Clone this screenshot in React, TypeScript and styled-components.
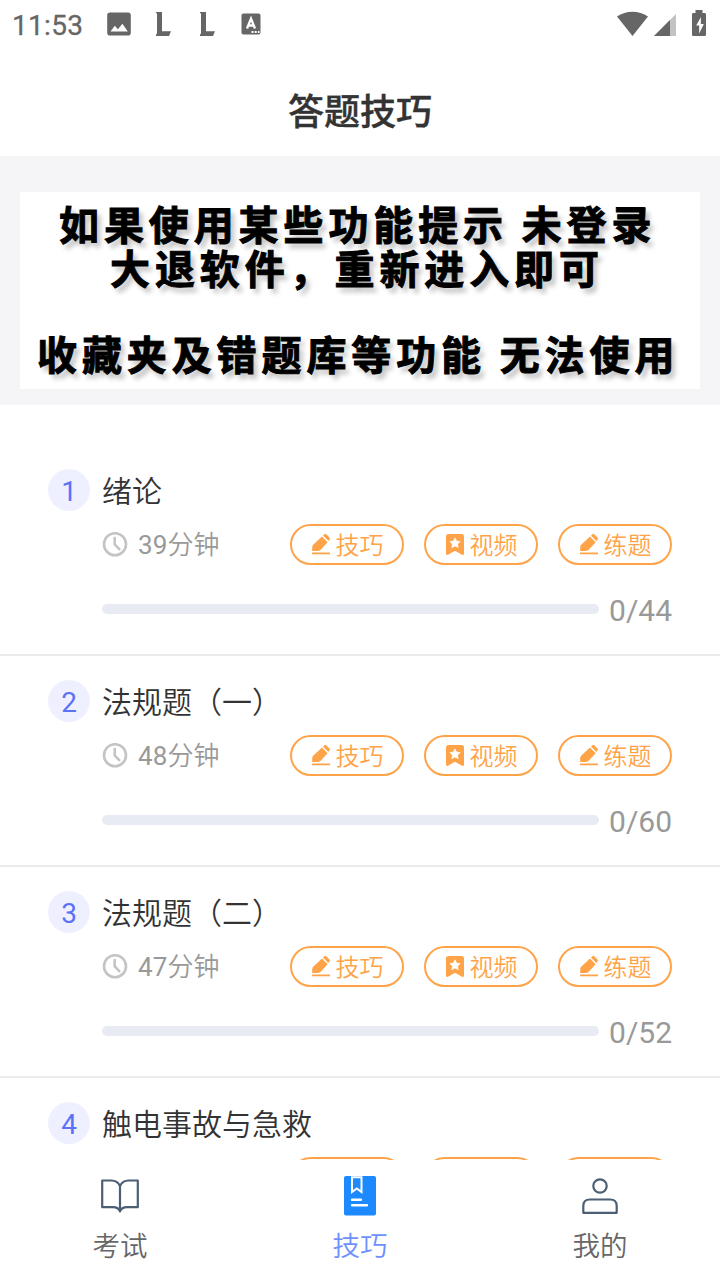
import React from "react";
import styled, { createGlobalStyle } from "styled-components";

const GlobalStyle = createGlobalStyle`
  * { box-sizing: border-box; }
  html, body { margin: 0; padding: 0; background: #fff; overflow: hidden; }
  body { font-family: Roboto, "Noto Sans CJK SC", sans-serif; }
  svg { display: block; flex: none; }
`;

const Screen = styled.div`
  width: 720px;
  height: 1280px;
  display: flex;
  flex-direction: column;
  background: #fff;
  overflow: hidden;
`;

const StatusBar = styled.div`
  height: 48px;
  flex: none;
  display: flex;
  justify-content: space-between;
  color: #666;
`;

const StatusGroup = styled.div`
  display: flex;
  align-items: flex-start;
`;

const Clock = styled.span`
  width: 107px;
  padding-left: 12px;
  font-size: 28px;
  font-weight: 400;
  line-height: 52px;
  letter-spacing: 0.3px;
  -webkit-text-stroke: 0.3px #666;
`;

const Header = styled.header`
  height: 108px;
  flex: none;
  text-align: center;
  font-size: 36px;
  font-weight: 500;
  line-height: 131px;
  color: #333;
  -webkit-text-stroke: 0.4px #333;
`;

const BannerArea = styled.section`
  height: 249px;
  flex: none;
  padding: 36px 20px 16px;
  background: #f5f5f8;
`;

const Banner = styled.div`
  height: 197px;
  background: #fff;
  overflow: hidden;
  padding-top: 9px;
`;

const BannerLine = styled.div<{ $indent: number; $gapAfter?: number }>`
  height: 44px;
  margin-left: ${(p) => p.$indent}px;
  margin-bottom: ${(p) => p.$gapAfter || 0}px;
  font-family: "Noto Sans CJK SC", sans-serif;
  font-size: 40px;
  font-weight: 700;
  line-height: 44px;
  letter-spacing: 4.9px;
  word-spacing: -0.3px;
  white-space: nowrap;
  color: #000;
  -webkit-text-stroke: 1px #000;
  text-shadow: 4px 5px 5px rgba(0, 0, 0, 0.25);
`;

const List = styled.main`
  flex: 1;
  min-height: 0;
  overflow: hidden;
  padding-top: 40px;
`;

const Item = styled.article`
  height: 211px;
  padding: 24px 48px 0;
  border-bottom: 2px solid #ebebeb;
`;

const TitleRow = styled.div`
  display: flex;
  align-items: center;
  height: 42px;
`;

const Badge = styled.span`
  width: 42px;
  height: 42px;
  border-radius: 50%;
  background: #eff0ff;
  color: #5b72f8;
  font-size: 28px;
  line-height: 45px;
  text-align: center;
`;

const Title = styled.h2`
  margin: 3px 0 0 12px;
  font-size: 30px;
  font-weight: 350;
  line-height: 42px;
  color: #333;
`;

const MetaRow = styled.div`
  display: flex;
  align-items: center;
  height: 41px;
  margin: 13px 0 0 54px;
`;

const Duration = styled.span`
  flex: 1;
  margin-left: 10px;
  padding-top: 1px;
  font-size: 26px;
  line-height: 42px;
  letter-spacing: 0.1px;
  color: #999;
`;

const Light = styled.span`
  font-weight: 350;
`;

const Pills = styled.div`
  display: flex;
  gap: 20px;
`;

const Pill = styled.button`
  width: 114px;
  height: 41px;
  padding: 3px 0 0;
  display: flex;
  align-items: center;
  justify-content: center;
  gap: 5px;
  border: 2px solid #ffa348;
  border-radius: 21px;
  background: #fff;
  color: #ffa348;
  font-family: inherit;
  font-size: 24px;
  font-weight: 350;
  line-height: 38px;

  svg {
    margin-top: -3px;
  }
`;

const ProgressRow = styled.div`
  display: flex;
  align-items: center;
  justify-content: space-between;
  height: 40px;
  margin: 24px 0 0 54px;
`;

const Track = styled.div`
  width: 497px;
  height: 10px;
  border-radius: 5px;
  background: #e8ebf3;
`;

const Count = styled.span`
  font-size: 30px;
  line-height: 42px;
  padding-top: 4px;
  color: #999;
`;

const TabBar = styled.nav`
  height: 120px;
  flex: none;
  display: flex;
  background: #fff;
`;

const Tab = styled.div<{ $active?: boolean }>`
  flex: 1;
  display: flex;
  flex-direction: column;
  align-items: center;
  padding-top: 15px;
  font-size: 27.5px;
  font-weight: 350;
  line-height: 40px;
  color: ${(p) => (p.$active ? "#6e90ff" : "#666")};
`;

const TabLabel = styled.span`
  margin-top: 10px;
`;

const NotificationIcons = () => (
  <svg width="160" height="48" viewBox="107 0 160 48" fill="#666">
    <path fillRule="evenodd" d="M110 12.500h18a2.800 2.800 0 0 1 2.800 2.800v17.400a2.800 2.800 0 0 1-2.800 2.800h-18a2.800 2.800 0 0 1-2.800-2.800V15.300a2.800 2.800 0 0 1 2.800-2.800zM110.500 31.500h17.300l-5.400-7.800-4.500 5.600-3.100-3.500z" />
    <path d="M156 12h6v19.200h9l-2 4.800h-13v-1.500l1-1V13.500l-1-.5z" />
    <path d="M200 12h6v19.200h9l-2 4.800h-13v-1.500l1-1V13.500l-1-.5z" />
    <rect x="241.500" y="13.500" width="19" height="21" rx="2" />
    <path d="M247 28.500l4-10 4 10M248.500 25.500h5" fill="none" stroke="#fff" strokeWidth="2.300" />
    <path d="M251.500 31h2v2h-2zM254.700 31h2v2h-2zM257.900 31h1.600v2h-1.600z" fill="#fff" />
  </svg>
);

const SystemIcons = () => (
  <svg width="104" height="48" viewBox="616 0 104 48" fill="#666">
    <path d="M617 16.500C626 10 639 10 648 16.500L632.500 36z" />
    <path d="M676 14v22h-22z" fill="#c2c2c2" />
    <path d="M670 20v16h-16z" />
    <path fillRule="evenodd" d="M695.500 10h7v3h2.200q1.300 0 1.300 1.300v20.400q0 1.300-1.300 1.300h-11.400q-1.300 0-1.300-1.300V14.300q0-1.300 1.300-1.300h2.200zM701 17l-4.800 8.500h3v8l4.600-9.500h-3z" />
  </svg>
);

const TimeIcon = () => (
  <svg width="26" height="26" viewBox="0 0 26 26" fill="none" stroke="#c4c4c4" strokeLinecap="round" strokeLinejoin="round">
    <circle cx="13" cy="12.200" r="11" strokeWidth="2.600" />
    <path d="M12.700 6v6.400l4.600 4.800" strokeWidth="2.600" />
  </svg>
);

const PencilIcon = () => (
  <svg width="20" height="24" viewBox="0 0 20 24" fill="#ffa348">
    <path d="M11 3.600l5.600 5.600-6.600 7.200q-1.400 1.400-3.200 1.600H1.200V14.400q0-1.600 1.200-2.800z" />
    <path d="M12 2.600l1.300-1.300q1-1 2 0l3.200 3.200q1 1 0 2l-1.100 1.500z" />
    <path d="M1 19.500h18v1.800H1z" />
  </svg>
);

const BookmarkIcon = () => (
  <svg width="20" height="24" viewBox="0 0 20 24">
    <path d="M3.500 1h13Q19 1 19 3.500v16.800q0 2.500-2 1.500l-6-3.500q-1-.6-2 0l-6 3.500q-2 1-2-1.500V3.500Q1 1 3.500 1z" fill="#ffa348" />
    <path d="M10 4.800l1.600 3.300 3.600.5-2.600 2.500.6 3.600-3.200-1.700-3.200 1.700.6-3.600-2.600-2.500 3.600-.5z" fill="#fff" stroke="#fff" strokeWidth=".6" strokeLinejoin="round" />
  </svg>
);

const ExamIcon = () => (
  <svg width="42" height="42" viewBox="0 0 42 42" fill="none" stroke="#4b5e74" strokeWidth="2.200" strokeLinejoin="round">
    <path d="M21 36V11Q18.500 5.500 12.500 5.500H3.200V32.200H14Q19.500 32.200 21 36.500Q22.500 32.200 28 32.200H38.800V5.500H29.500Q23.500 5.500 21 11" />
  </svg>
);

const SkillsIcon = () => (
  <svg width="42" height="42" viewBox="0 0 42 42">
    <rect x="5" y="1" width="32" height="39.500" rx="2" fill="#1c89ff" />
    <path d="M13 2.300h9.500V17l-4.700-3.600L13 17z" fill="#1c89ff" stroke="#fff" strokeWidth="2" />
    <path d="M13 24.700h9M13 30.300h15" stroke="#fff" strokeWidth="2.400" strokeLinecap="round" />
  </svg>
);

const ProfileIcon = () => (
  <svg width="42" height="42" viewBox="0 0 42 42" fill="none" stroke="#4b5e74" strokeWidth="2.200" strokeLinejoin="round">
    <circle cx="21" cy="11" r="6.700" />
    <path d="M4.300 37.800V31q0-6.500 6.500-6.500h20.400q6.500 0 6.500 6.500v6.800z" />
  </svg>
);

const chapters = [
  { title: "绪论", minutes: 39, total: 44 },
  { title: "法规题（一）", minutes: 48, total: 60 },
  { title: "法规题（二）", minutes: 47, total: 52 },
  { title: "触电事故与急救" },
];

export default function App() {
  return (
    <>
      <GlobalStyle />
      <Screen>
        <StatusBar>
          <StatusGroup>
            <Clock>11:53</Clock>
            <NotificationIcons />
          </StatusGroup>
          <SystemIcons />
        </StatusBar>
        <Header>答题技巧</Header>
        <BannerArea>
          <Banner>
            <BannerLine $indent={39}>如果使用某些功能提示 未登录</BannerLine>
            <BannerLine $indent={90} $gapAfter={42}>大退软件，重新进入即可</BannerLine>
            <BannerLine $indent={17}>收藏夹及错题库等功能 无法使用</BannerLine>
          </Banner>
        </BannerArea>
        <List>
          {chapters.map((c, i) => (
            <Item key={c.title}>
              <TitleRow>
                <Badge>{i + 1}</Badge>
                <Title>{c.title}</Title>
              </TitleRow>
              {c.total ? (
                <>
                  <MetaRow>
                    <TimeIcon />
                    <Duration>{c.minutes}<Light>分钟</Light></Duration>
                    <Pills>
                      <Pill><PencilIcon />技巧</Pill>
                      <Pill><BookmarkIcon />视频</Pill>
                      <Pill><PencilIcon />练题</Pill>
                    </Pills>
                  </MetaRow>
                  <ProgressRow>
                    <Track />
                    <Count>0/{c.total}</Count>
                  </ProgressRow>
                </>
              ) : (
                <MetaRow>
                  <Duration />
                  <Pills>
                    <Pill />
                    <Pill />
                    <Pill />
                  </Pills>
                </MetaRow>
              )}
            </Item>
          ))}
        </List>
        <TabBar>
          <Tab><ExamIcon /><TabLabel>考试</TabLabel></Tab>
          <Tab $active><SkillsIcon /><TabLabel>技巧</TabLabel></Tab>
          <Tab><ProfileIcon /><TabLabel>我的</TabLabel></Tab>
        </TabBar>
      </Screen>
    </>
  );
}
